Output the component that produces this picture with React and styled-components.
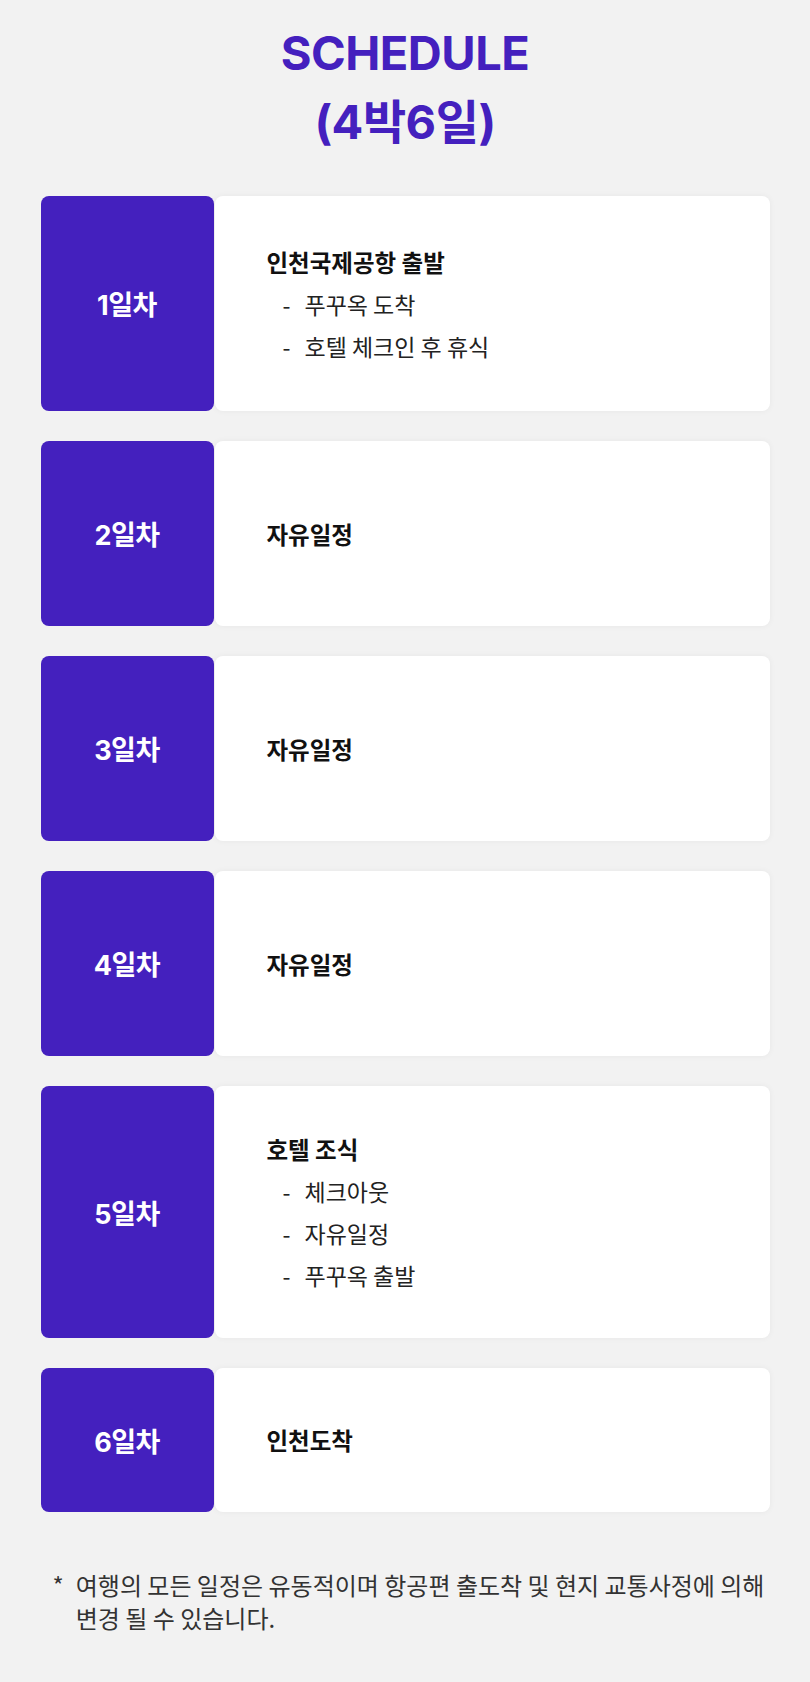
import React from 'react';
import styled, { createGlobalStyle } from 'styled-components';

const GlobalStyle = createGlobalStyle`
  html, body {
    margin: 0;
    padding: 0;
    background: #f2f2f2;
  }
  body {
    font-family: Inter, "Noto Sans CJK KR", sans-serif;
  }
`;

const Page = styled.div`
  width: 729px;
  margin: 0 auto;
  padding: 18px 0 60px;
`;

const Title = styled.h1`
  margin: 0 0 40px;
  text-align: center;
  color: #4420be;
  font-family: Inter, "Noto Sans CJK KR", sans-serif;
  font-size: 47px;
  font-weight: 700;
  line-height: 69px;
  letter-spacing: -0.5px;
`;

const List = styled.div`
  display: flex;
  flex-direction: column;
  gap: 30px;
`;

const Row = styled.div`
  display: flex;
  gap: 1px;
  min-height: ${p => p.height}px;
`;

const Day = styled.div`
  flex: 0 0 173px;
  display: flex;
  align-items: center;
  justify-content: center;
  background: #4420be;
  border-radius: 8px;
  color: #fff;
  font-family: Inter, "Noto Sans CJK KR", sans-serif;
  font-size: 27px;
  font-weight: 700;
  letter-spacing: -0.5px;
`;

const Card = styled.div`
  flex: 1;
  display: flex;
  flex-direction: column;
  justify-content: center;
  padding: 0 52px;
  background: #fff;
  border-radius: 8px;
  box-shadow: 0 0 6px rgba(0, 0, 0, 0.05);
`;

const Heading = styled.div`
  font-family: "Noto Sans CJK KR", sans-serif;
  font-size: 23.5px;
  font-weight: 700;
  color: #111;
  line-height: 42px;
`;

const Item = styled.div`
  display: flex;
  gap: 14px;
  padding-left: 16px;
  font-family: "Noto Sans CJK KR", sans-serif;
  font-size: 23px;
  font-weight: 400;
  color: #222;
  line-height: 42px;
`;

const Note = styled.p`
  display: flex;
  gap: 12px;
  margin: 56px 0 0;
  padding-left: 12px;
  font-family: "Noto Sans CJK KR", sans-serif;
  font-size: 24px;
  color: #333;
  line-height: 33px;
`;

const days = [
  { label: '1일차', height: 215, title: '인천국제공항 출발', items: ['푸꾸옥 도착', '호텔 체크인 후 휴식'] },
  { label: '2일차', height: 185, title: '자유일정', items: [] },
  { label: '3일차', height: 185, title: '자유일정', items: [] },
  { label: '4일차', height: 185, title: '자유일정', items: [] },
  { label: '5일차', height: 252, title: '호텔 조식', items: ['체크아웃', '자유일정', '푸꾸옥 출발'] },
  { label: '6일차', height: 144, title: '인천도착', items: [] },
];

export default function App() {
  return (
    <>
      <GlobalStyle />
      <Page>
        <Title>SCHEDULE<br />(4박6일)</Title>
        <List>
          {days.map(d => (
            <Row key={d.label} height={d.height}>
              <Day>{d.label}</Day>
              <Card>
                <Heading>{d.title}</Heading>
                {d.items.map(it => (
                  <Item key={it}><span>-</span><span>{it}</span></Item>
                ))}
              </Card>
            </Row>
          ))}
        </List>
        <Note>
          <span>*</span>
          <span>여행의 모든 일정은 유동적이며 항공편 출도착 및 현지 교통사정에 의해<br />변경 될 수 있습니다.</span>
        </Note>
      </Page>
    </>
  );
}
